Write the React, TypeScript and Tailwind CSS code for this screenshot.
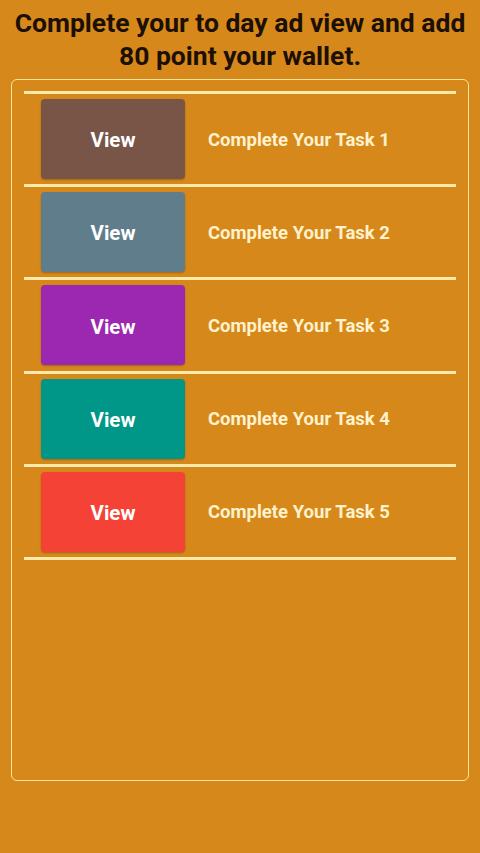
import React from "react";

const tasks = [
  { n: 1, color: "bg-[#795548]" },
  { n: 2, color: "bg-[#607d8b]" },
  { n: 3, color: "bg-[#9c27b0]" },
  { n: 4, color: "bg-[#009688]" },
  { n: 5, color: "bg-[#f44336]" },
];

export default function App() {
  return (
    <div
      className="w-[480px] h-[853px] bg-[#d6891a] flex flex-col"
      style={{ fontFamily: "Roboto, 'Liberation Sans', sans-serif" }}
    >
      <h1 className="text-[26.5px] leading-[33px] font-bold text-[#1c0f05] text-center pt-[6px] px-1">
        Complete your to day ad view and add
        <br />
        80 point your wallet.
      </h1>
      <div className="mx-[11px] mt-[7px] h-[702px] border-[1.5px] border-[#fbe39a] rounded-[6px] px-[12px] pt-[11px]">
        <div className="h-[3px] bg-[#ffe9ab]" />
        {tasks.map((t) => (
          <div key={t.n}>
            <div className="flex items-center pl-[17px] pt-[5px] pb-[5.2px]">
              <div
                className={`${t.color} w-[144px] h-[80px] rounded-[4px] flex items-center justify-center pt-[3px] text-white font-bold text-[20.5px] shadow-[0_1px_2px_rgba(0,0,0,0.25)]`}
              >
                View
              </div>
              <div className="ml-[23px] pt-[3px] text-[#fff2cc] font-bold text-[18.5px]">
                Complete Your Task {t.n}
              </div>
            </div>
            <div className="h-[3px] bg-[#ffe9ab]" />
          </div>
        ))}
      </div>
    </div>
  );
}
